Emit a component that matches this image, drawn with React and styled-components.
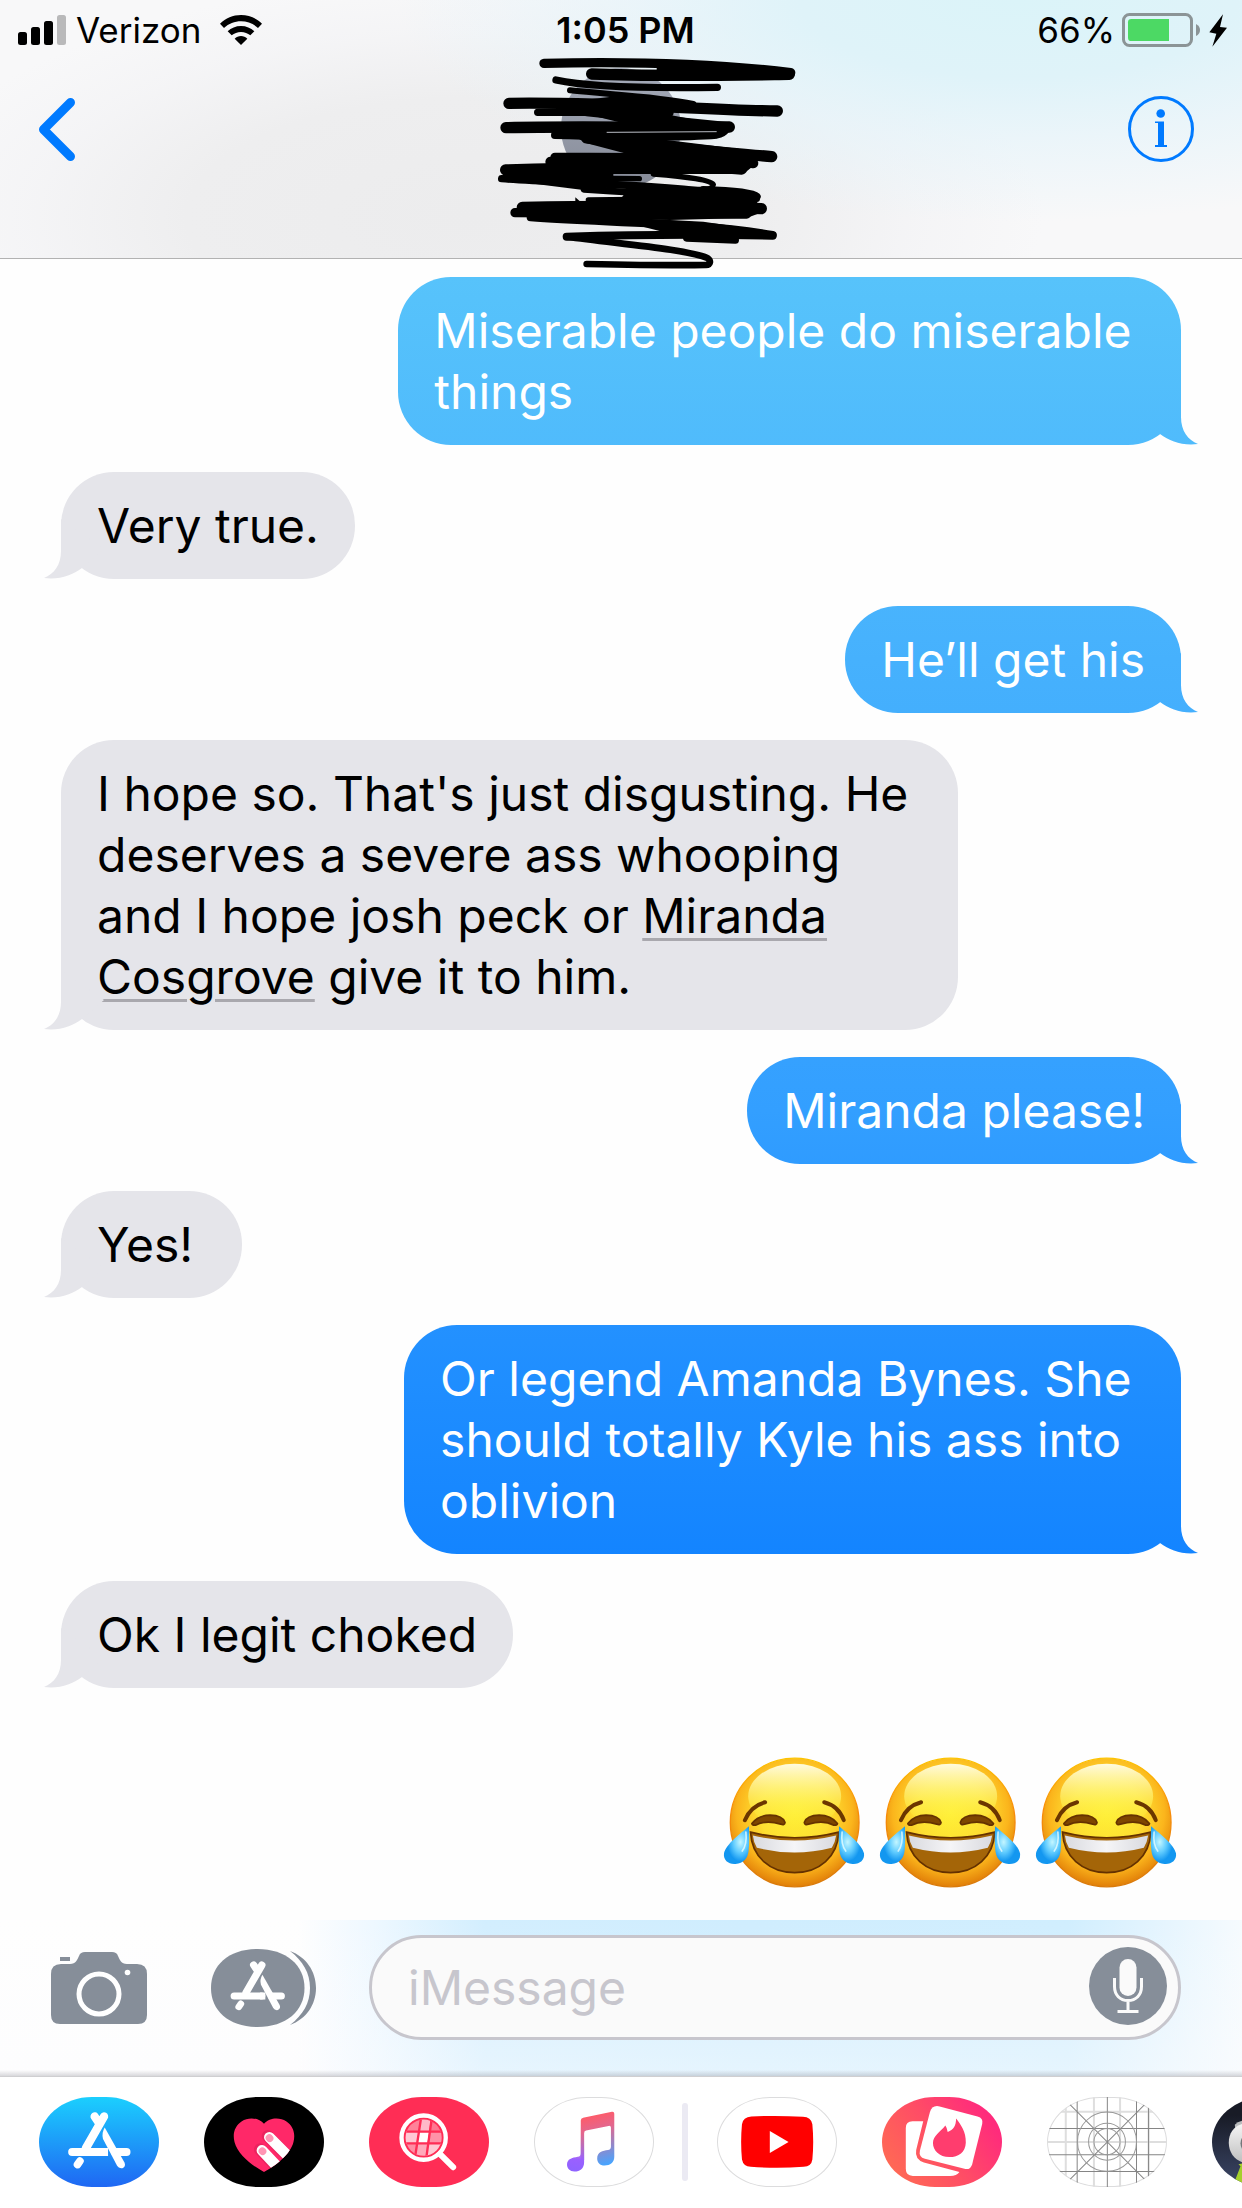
import React from "react";
import styled, { createGlobalStyle, css } from "styled-components";

const GlobalStyle = createGlobalStyle`
  *, *::before, *::after { box-sizing: border-box; }
  body {
    margin: 0;
    background: #fefefe;
    color: #000;
    font-family: Inter, Roboto, "Liberation Sans", sans-serif;
  }
  svg { display: block; }
`;

const Screen = styled.div`
  display: flex;
  flex-direction: column;
  min-height: 100vh;
  overflow: hidden;
`;

const Header = styled.header`
  position: relative;
  z-index: 1;
  border-bottom: 1px solid #b2b2b2;
  background:
    radial-gradient(ellipse 50% 86% at 82% 0%, #dbf4f9 0%, #dff3f9 35%, rgba(226, 243, 250, 0.6) 62%, rgba(240, 247, 249, 0) 100%),
    radial-gradient(ellipse 46% 92% at 38% 84%, #ececed 0%, #eeeeef 50%, rgba(243, 243, 245, 0.7) 78%, rgba(248, 248, 248, 0) 100%),
    #f8f8f9;
`;

const StatusBar = styled.div`
  display: grid;
  grid-template-columns: 1fr auto 1fr;
  align-items: center;
  height: 60px;
  padding: 0 15px 0 18px;
  font-size: 35px;
  line-height: 60px;
`;

const StatusGroup = styled.div`
  display: flex;
  align-items: center;
  justify-content: ${(p) => (p.$end ? "flex-end" : "flex-start")};
  gap: ${(p) => (p.$end ? "7px" : "10px")};
`;

const Carrier = styled.span`
  padding-right: 9px;
`;

const Clock = styled.time`
  padding-left: 6px;
  font-size: 36px;
  font-weight: 600;
`;

const NavBar = styled.nav`
  display: flex;
  justify-content: space-between;
  height: 198px;
  padding: 36px 48px 0 38px;
`;

const IconButton = styled.button`
  flex: none;
  align-self: ${(p) => p.$align || "center"};
  display: block;
  margin: 0;
  padding: 0;
  border: 0;
  background: none;
  cursor: pointer;
`;

const Contact = styled.div`
  position: absolute;
  top: 0;
  left: 50%;
  margin-left: -180px;
  pointer-events: none;
`;

const Thread = styled.main`
  flex: 1;
  display: flex;
  flex-direction: column;
  align-items: flex-start;
  gap: 27px;
  padding: 18px 61px 31px;
`;

const sentFill = css`
  background: linear-gradient(180deg, #59c5fb 0px, #57c3fb 277px, #46b1fd 660px, #339fff 1110px, #2391ff 1325px, #1384ff 1560px) fixed;
`;

const Bubble = styled.p`
  position: relative;
  min-width: 181px;
  max-width: 901px;
  margin: 0;
  padding: 23px 36px;
  border-radius: 53px;
  font-size: 48px;
  line-height: 61px;
  white-space: pre-wrap;
  align-self: ${(p) => (p.$sent ? "flex-end" : "flex-start")};
  color: ${(p) => (p.$sent ? "#fff" : "#000")};
  ${(p) => (p.$sent ? sentFill : "background: #e5e5ea;")}

  &::after {
    content: "";
    position: absolute;
    bottom: 0;
    width: 60px;
    height: 60px;
    ${(p) =>
      p.$sent
        ? css`
            right: -17px;
            ${sentFill}
            clip-path: path("M43 0 V32 C43 46 50 55 60 59 C44 61 32 56 22 49 L0 30 Z");
          `
        : css`
            left: -17px;
            background: #e5e5ea;
            clip-path: path("M17 0 V32 C17 46 10 55 0 59 C16 61 28 56 38 49 L60 30 Z");
          `}
  }
`;

const Line = styled.span`
  display: block;
`;

const DetectedLink = styled.a`
  color: inherit;
  text-decoration: underline;
  text-decoration-color: #a9a8ae;
  text-decoration-thickness: 3px;
  text-underline-offset: 5px;
`;

const EmojiRow = styled.div`
  display: flex;
  align-self: flex-end;
  gap: 14px;
  padding: 41px 4px 0 0;
`;

const ComposeBar = styled.form`
  display: flex;
  align-items: center;
  padding: 15px 61px 36px 51px;
  border-bottom: 1px solid #cfcfd1;
  background:
    linear-gradient(0deg, rgba(120, 120, 130, 0.28) 0, rgba(120, 120, 130, 0) 6px),
    linear-gradient(180deg, rgba(252, 252, 254, 0) 0%, rgba(252, 252, 254, 0.5) 100%),
    linear-gradient(90deg, #fefefe 0%, #fefefe 24%, #eef8ff 30%, #d2eefe 39%, #cfedfe 60%, #d0eefe 86%, #e6f5fe 94%, #f6fbfe 100%);
`;

const Drawer = styled(IconButton)`
  margin: 0 53px 0 64px;
`;

const Field = styled.div`
  flex: 1;
  min-width: 0;
  display: flex;
  align-items: center;
  height: 105px;
  padding: 0 11px 3px 36px;
  border: 3px solid #c7c6cd;
  border-radius: 53px;
  background: #fafafa;
`;

const MessageInput = styled.input`
  flex: 1;
  min-width: 0;
  height: 90px;
  padding: 3px 0 0;
  border: 0;
  outline: 0;
  background: none;
  color: #000;
  font: inherit;
  font-size: 48px;
  &::placeholder { color: #c7c6cd; opacity: 1; }
`;

const AppStrip = styled.nav`
  display: flex;
  align-items: center;
  gap: 45px;
  height: 131px;
  padding: 0 0 1px 39px;
  overflow: hidden;
  background: #fff;
`;

const AppPill = styled.button`
  flex: none;
  width: 120px;
  height: 90px;
  margin: 0;
  padding: 0;
  overflow: hidden;
  border: 0;
  border-radius: 53px / 45px;
  background: ${(p) => p.$fill || "#fff"};
  box-shadow: inset 0 0 0 1px ${(p) => (p.$fill ? "transparent" : "#dcdcdd")};
  cursor: pointer;
`;

const Divider = styled.span`
  flex: none;
  width: 6px;
  height: 78px;
  margin: 0 -16px 0 -17px;
  border-radius: 3px;
  background: #ebeaf3;
`;

function SignalIcon() {
  return (
    <svg width="48" height="30" viewBox="0 0 48 30" aria-hidden="true">
      <rect x="0" y="17" width="9" height="13" rx="2.5" />
      <rect x="13" y="12" width="9" height="18" rx="2.5" />
      <rect x="26" y="6" width="9" height="24" rx="2.5" />
      <rect x="39" y="0" width="9" height="30" rx="2.5" fill="#b9b9ba" />
    </svg>
  );
}

function WifiIcon() {
  return (
    <svg width="42" height="30" viewBox="0 0 126 90" aria-hidden="true">
      <path d="M63 0C87 0 109 9 126 26L114 39C100 26 82 19 63 19S26 26 12 39L0 26C17 9 39 0 63 0Z" />
      <path d="M63 33C79 33 92 39 103 49L91 61C83 55 74 51 63 51S43 55 35 61L23 49C34 39 47 33 63 33Z" />
      <path d="M63 63C70 63 77 66 82 71L63 90L44 71C49 66 56 63 63 63Z" />
    </svg>
  );
}

function BatteryIcon() {
  return (
    <svg width="105" height="34" viewBox="0 0 315 102" aria-hidden="true">
      <rect x="4.500" y="4.500" width="204" height="93" rx="18" fill="none" stroke="#8b9496" strokeWidth="9" />
      <path d="M28 18H141V84H28Q18 84 18 74V28Q18 18 28 18Z" fill="#4cd964" />
      <path d="M222 33Q234 39 234 51T222 69Z" fill="#8b9496" />
      <path d="M303 4L262 58L283 62L271 101L315 44L294 42Z" />
    </svg>
  );
}

const strokes = [
  ["M222 190C400 186 700 186 962 218", 28],
  ["M365 222C560 230 760 226 958 223", 34],
  ["M258 240C330 256 480 266 742 262", 22],
  ["M300 271C420 284 560 288 670 312", 18],
  ["M440 290L660 318L420 318Z", 10],
  ["M117 310C400 305 700 330 922 333", 34],
  ["M203 337C350 338 480 336 600 338", 22],
  ["M350 336C500 352 650 368 778 380", 26],
  ["M108 383C300 378 600 384 778 381", 34],
  ["M255 405C450 410 650 412 740 404Q760 400 768 388", 24],
  ["M350 414C550 440 750 456 905 470", 34],
  ["M560 440C650 460 800 478 850 490", 30],
  ["M255 472C450 472 700 470 840 485", 28],
  ["M242 486C450 492 700 500 815 508", 32],
  ["M107 510C300 505 500 500 700 502", 34],
  ["M95 536C250 548 500 550 720 576", 22],
  ["M107 524C300 534 450 536 508 536", 16],
  ["M550 522C650 530 728 540 730 554Q728 566 700 572", 16],
  ["M342 568C500 578 700 590 860 596", 20],
  ["M700 570C780 572 850 580 860 590", 24],
  ["M355 600L700 596", 16],
  ["M157 622C400 618 700 620 874 626", 34],
  ["M135 638C400 640 700 640 830 642", 28],
  ["M182 652C400 668 700 668 908 705", 24],
  ["M500 668L800 690L600 694Z", 14],
  ["M290 710C450 705 700 702 908 707", 24],
  ["M650 714L796 720", 22],
  ["M290 710C450 732 650 748 712 774C724 782 722 796 706 795C600 797 500 795 350 792", 20],
];

const solids = [
  "M470 285L660 305V335H340V300Z",
  "M560 190L960 215V238H560Z",
  "M360 345H600L690 362L785 372V392H400L445 366Z",
  "M300 402H745L590 420L900 458V482H550L350 430Z",
  "M250 462H860V490L820 522H110V500H238Z",
  "M100 515H430V562L340 570L100 540Z",
  "M480 560H720L862 590V612H440Z",
  "M150 612H880V635L830 654L600 660L180 655Z",
  "M500 655L700 665L905 695V705H640L600 690Z",
  "M316 592L332 606H316Z",
];

function RedactedContact() {
  return (
    <svg width="360" height="280" viewBox="-87 0 1080 840" role="img" aria-label="Contact">
      <defs>
        <linearGradient id="avatar" x1="0" y1="0" x2="0" y2="1">
          <stop offset="0" stopColor="#a5abb9" />
          <stop offset="1" stopColor="#858a97" />
        </linearGradient>
      </defs>
      <circle cx="453" cy="384" r="180" fill="url(#avatar)" />
      <g stroke="#000" strokeLinecap="round" strokeLinejoin="round" fill="none">
        {strokes.map(([d, w]) => (
          <path key={d} d={d} strokeWidth={w} fill={d.endsWith("Z") ? "#000" : "none"} />
        ))}
      </g>
      {solids.map((d) => (
        <path key={d} d={d} />
      ))}
      <path d="M410 397L740 395" stroke="#b9bcc4" strokeWidth="3" />
    </svg>
  );
}

function StoreGlyph() {
  return (
    <g stroke="#fff" fill="none" strokeLinecap="round" strokeWidth="25">
      <path d="M312 170L258 264M284 170L296 188" />
      <path d="M217 276H312M345 276H379" strokeWidth="24" />
      <path d="M314 203L373 307Q378 319 367 324Q356 326 351 317L309 237Q304 220 314 203Z" fill="#fff" stroke="none" />
      <path d="M324 264V288H306V264Z" fill="#fff" stroke="none" />
      <path d="M240 303L233 313" strokeWidth="23" />
    </g>
  );
}

function LaughingFace() {
  const tear = "M146 290C120 312 76 345 71 372C68 394 86 406 106 404C130 402 142 388 145 366C148 342 147 312 146 290Z";
  return (
    <svg width="142" height="133" viewBox="68 79 428 400" role="img" aria-label="Face with tears of joy">
      <defs>
        <radialGradient id="face" cx="0.5" cy="0.42" r="0.6">
          <stop offset="0" stopColor="#fff035" />
          <stop offset="0.45" stopColor="#fedf32" />
          <stop offset="0.75" stopColor="#fbb51c" />
          <stop offset="1" stopColor="#dd7605" />
        </radialGradient>
        <linearGradient id="shine" x1="0" y1="0" x2="0" y2="1">
          <stop offset="0" stopColor="#fffbe0" />
          <stop offset="0.6" stopColor="#fff35a" stopOpacity="0.6" />
          <stop offset="1" stopColor="#ffee33" stopOpacity="0" />
        </linearGradient>
        <linearGradient id="rim" x1="0" y1="0" x2="0" y2="1">
          <stop offset="0" stopColor="#fdc400" />
          <stop offset="0.4" stopColor="#f98d0a" />
          <stop offset="1" stopColor="#d97a0a" />
        </linearGradient>
        <radialGradient id="tear" cx="0.65" cy="0.42" r="0.6">
          <stop offset="0" stopColor="#c4f6ff" />
          <stop offset="0.45" stopColor="#62cdff" />
          <stop offset="0.85" stopColor="#1397f0" />
        </radialGradient>
        <linearGradient id="teeth" x1="0" y1="0" x2="1" y2="0">
          <stop offset="0" stopColor="#d9dadf" />
          <stop offset="0.5" stopColor="#f5f5f7" />
          <stop offset="1" stopColor="#d9dadf" />
        </linearGradient>
      </defs>
      <circle cx="284" cy="279" r="194" fill="url(#face)" stroke="url(#rim)" strokeWidth="4" />
      <ellipse cx="284" cy="200" rx="140" ry="98" fill="url(#shine)" />
      <g fill="none" stroke="#6b3600" strokeWidth="12" strokeLinecap="round">
        <path d="M134 272Q152 229 195 218" />
        <path d="M432 272Q416 229 373 218" />
      </g>
      <g fill="#7e4600" stroke="#653200" strokeWidth="5" strokeLinejoin="round">
        <path d="M155 282Q175 257 210 257Q248 258 255 279Q254 288 242 284Q198 270 166 287Q156 288 155 282Z" />
        <path d="M413 282Q393 257 358 257Q320 258 313 279Q314 288 326 284Q370 270 402 287Q412 288 413 282Z" />
      </g>
      <path d="M151 308Q284 342 417 308C414 382 358 430 284 430S154 382 151 308Z" fill="#a46508" stroke="#643100" strokeWidth="5" />
      <path d="M158 318Q284 348 409 318Q406 340 396 355Q284 384 170 355Q160 338 158 318Z" fill="url(#teeth)" />
      <path d={tear} fill="url(#tear)" />
      <path d={tear} fill="url(#tear)" transform="matrix(-1 0 0 1 564 0)" />
      <g fill="none" stroke="#e6fcff" strokeWidth="5" strokeLinecap="round" opacity="0.8">
        <path d="M137 308Q141 345 126 365" />
        <path d="M427 308Q423 345 438 365" />
      </g>
    </svg>
  );
}

function PillArt({ x, children }) {
  return (
    <svg width="120" height="90" viewBox={`${x} 112 358 268`} preserveAspectRatio="none" aria-hidden="true">
      {children}
    </svg>
  );
}

const heart = "M792 192C808 172 840 172 858 184C880 198 886 222 880 246C870 284 826 318 792 335C758 318 714 284 704 246C698 222 704 198 726 184C744 172 776 172 792 192Z";

export default function App() {
  return (
    <>
      <GlobalStyle />
      <Screen>
        <Header>
          <StatusBar>
            <StatusGroup>
              <SignalIcon />
              <Carrier>Verizon</Carrier>
              <WifiIcon />
            </StatusGroup>
            <Clock>1:05 PM</Clock>
            <StatusGroup $end>
              <span>66%</span>
              <BatteryIcon />
            </StatusGroup>
          </StatusBar>
          <NavBar>
            <IconButton type="button" aria-label="Back" $align="flex-start">
              <svg width="38" height="66" viewBox="0 0 38 66" fill="none" stroke="#007aff" strokeWidth="9" strokeLinecap="round" strokeLinejoin="round">
                <path d="M32.500 6.500L5.500 33.500L32.500 60.500" />
              </svg>
            </IconButton>
            <IconButton type="button" aria-label="Details" $align="flex-start">
              <svg width="66" height="66" viewBox="0 0 66 66" fill="#007aff">
                <circle cx="33" cy="33" r="31.500" fill="none" stroke="#007aff" strokeWidth="3" />
                <circle cx="32.700" cy="17.500" r="4.300" />
                <path d="M27 25.500H36V49H39V51H27V49H30V27H27Z" />
              </svg>
            </IconButton>
          </NavBar>
          <Contact>
            <RedactedContact />
          </Contact>
        </Header>

        <Thread>
          <Bubble $sent>{"Miserable people do miserable \nthings"}</Bubble>
          <Bubble>Very true.</Bubble>
          <Bubble $sent>He’ll get his</Bubble>
          <Bubble>
            <Line>{"I hope so. That's just disgusting. He "}</Line>
            <Line>{"deserves a severe ass whooping "}</Line>
            <Line>
              {"and I hope josh peck or "}
              <DetectedLink href="#miranda">Miranda</DetectedLink>
            </Line>
            <Line>
              <DetectedLink href="#miranda">Cosgrove</DetectedLink>
              {" give it to him."}
            </Line>
          </Bubble>
          <Bubble $sent>Miranda please!</Bubble>
          <Bubble>Yes!</Bubble>
          <Bubble $sent>{"Or legend Amanda Bynes. She \nshould totally Kyle his ass into \noblivion"}</Bubble>
          <Bubble>Ok I legit choked</Bubble>
          <EmojiRow>
            <LaughingFace />
            <LaughingFace />
            <LaughingFace />
          </EmojiRow>
        </Thread>

        <ComposeBar onSubmit={(e) => e.preventDefault()}>
          <IconButton type="button" aria-label="Camera">
            <svg width="96" height="72" viewBox="0 0 96 72">
              <path d="M10 12H19C25 12 26 8 28 4C29 1 31 0 34 0H61C64 0 66 1 67 4C69 8 70 12 76 12H86Q96 12 96 22V63Q96 72 87 72H9Q0 72 0 63V22Q0 12 10 12Z" fill="#868e99" />
              <rect x="9" y="5" width="10" height="4" fill="#868e99" />
              <circle cx="48" cy="42" r="20" fill="none" stroke="#fff" strokeWidth="5" />
              <circle cx="76.500" cy="20.500" r="2.800" fill="#fff" />
            </svg>
          </IconButton>
          <Drawer type="button" aria-label="Apps">
            <svg width="105" height="78" viewBox="0 0 105 78">
              <path d="M46.500 0C75 0 93.500 16 93.500 39S75 78 46.500 78S0 62 0 39S18 0 46.500 0Z" fill="#868e99" />
              <path d="M79 2C95 8 105 22 105 39S95 70 79 76C92 66 99 54 99 39S92 12 79 2Z" fill="#868e99" />
              <g transform="translate(46.6 36.8) scale(0.292) translate(-297.5 -241)">
                <StoreGlyph />
              </g>
            </svg>
          </Drawer>
          <Field>
            <MessageInput type="text" placeholder="iMessage" aria-label="iMessage" />
            <IconButton type="button" aria-label="Dictate">
              <svg width="78" height="78" viewBox="0 0 78 78">
                <circle cx="39" cy="39" r="39" fill="#868e99" />
                <rect x="30.500" y="12" width="17" height="37" rx="8.500" fill="#fafafa" />
                <path d="M25.500 31V39.500C25.500 48 31 53.500 39 53.500S52.500 48 52.500 39.500V31M39 54V64M28.500 64.500H49.500" fill="none" stroke="#fafafa" strokeWidth="3" />
              </svg>
            </IconButton>
          </Field>
        </ComposeBar>

        <AppStrip aria-label="iMessage apps">
          <AppPill aria-label="App Store" $fill="linear-gradient(180deg, #1bcffe, #1f67f3)">
            <PillArt x={118}>
              <StoreGlyph />
            </PillArt>
          </AppPill>
          <AppPill aria-label="Digital Touch" $fill="#000">
            <PillArt x={613}>
              <clipPath id="heart"><path d={heart} /></clipPath>
              <path d={heart} fill="#ff2968" />
              <g clipPath="url(#heart)" strokeLinecap="round">
                <path d="M803 228L880 306M780 268L850 342" stroke="#d31d55" strokeWidth="36" opacity="0.45" />
                <path d="M808 232L890 314M786 271L850 339" stroke="#fff" strokeWidth="32" />
                <path d="M808 234L809 235M787 273L788 274" stroke="#ff95b4" strokeWidth="22" />
              </g>
            </PillArt>
          </AppPill>
          <AppPill aria-label="Image search" $fill="#ff2d55">
            <PillArt x={28}>
              <clipPath id="lens"><circle cx="191" cy="233" r="54" /></clipPath>
              <g clipPath="url(#lens)">
                <path d="M130 170H183L176 213H130Z" fill="#ff8299" />
                <path d="M183 170H213L208 213H177Z" fill="#ffb9c8" />
                <path d="M213 170H260V213H208Z" fill="#ff7690" />
                <path d="M130 213H176L169 252H130Z" fill="#ffc9d4" />
                <path d="M176 213H208L202 252H169Z" fill="#fff" />
                <path d="M208 213H260V252H202Z" fill="#ff92a8" />
                <path d="M130 252H169L165 300H130Z" fill="#ff8da4" />
                <path d="M169 252H202L196 300H165Z" fill="#ffa9ba" />
                <path d="M202 252H260V300H196Z" fill="#ffc9d4" />
                <path d="M130 215H255M130 250H255M184 170L164 300M216 170L198 300" stroke="#ff2d55" strokeWidth="7" />
              </g>
              <circle cx="191" cy="233" r="66" fill="none" stroke="#fff" strokeWidth="13" />
              <path d="M240 282L279 321" stroke="#fff" strokeWidth="18" strokeLinecap="round" />
            </PillArt>
          </AppPill>
          <AppPill aria-label="Music">
            <PillArt x={522.5}>
              <defs>
                <linearGradient id="music" gradientUnits="userSpaceOnUse" x1="675" y1="170" x2="715" y2="320">
                  <stop offset="0" stopColor="#ff5b68" />
                  <stop offset="0.3" stopColor="#e2678f" />
                  <stop offset="1" stopColor="#47a5ff" />
                </linearGradient>
                <linearGradient id="noteLeft" gradientUnits="userSpaceOnUse" x1="660" y1="200" x2="645" y2="330">
                  <stop offset="0" stopColor="#ff5b68" stopOpacity="0" />
                  <stop offset="0.75" stopColor="#9a60ff" />
                  <stop offset="1" stopColor="#8f63ff" />
                </linearGradient>
              </defs>
              <path d="M662 182Q662 176 669 174L755 156Q762 155 762 162V290C762 307 750 316 733 316C719 316 711 307 711 295C711 276 728 272 743 270Q752 269 752 260V203Q752 197 745 198L678 212Q672 213 672 220V300H662Z" fill="url(#music)" />
              <path d="M662 200H672V306C672 324 660 334 643 334C630 334 621 325 621 314C621 296 636 293 653 290Q662 288 662 280Z" fill="url(#noteLeft)" />
            </PillArt>
          </AppPill>
          <Divider />
          <AppPill aria-label="YouTube">
            <PillArt x={1071.5}>
              <path d="M1174 170Q1251 166 1328 171Q1352 172 1356 193Q1361 246 1356 298Q1353 319 1330 320Q1251 326 1172 320Q1150 319 1146 298Q1141 246 1146 193Q1149 172 1174 170Z" fill="#f00" />
              <path d="M1229 213V279L1285 246Z" fill="#fff" />
            </PillArt>
          </AppPill>
          <AppPill aria-label="Tinder Stacks" $fill="linear-gradient(55deg, #ff6a54 10%, #ff4c66 50%, #ff2b7c 85%)">
            <PillArt x={127}>
              <path d="M250 184H218Q198 184 198 204V326Q198 347 219 347H330Q350 347 358 335L252 307Q224 298 229 270Z" fill="#fff" />
              <path d="M299 140L412 170Q430 175 426 192L396 312Q391 330 373 326L255 296Q236 291 240 272L270 157Q276 135 299 140Z" fill="#fff" />
              <path d="M348 176C362 194 378 215 377 248C376 276 356 291 328 291C298 290 279 272 279 248C280 228 300 217 316 197Q321 204 323 216C340 210 348 198 348 176Z" fill="#ff3d6e" />
            </PillArt>
          </AppPill>
          <AppPill aria-label="Placeholder app">
            <PillArt x={622}>
              <g fill="none">
                <path d="M678 112V380M762 112V380M840 112V380M925 112V380M622 156H980M622 246H980" stroke="#dedede" strokeWidth="6" />
                <path d="M712 112V380M802 112V380M889 112V380M925 112V380M622 206H980M622 284H980M622 334H980M667 111L937 381M937 111L667 381" stroke="#858585" strokeWidth="3" />
                <circle cx="801" cy="245" r="88" stroke="#999" strokeWidth="3" />
                <circle cx="801" cy="245" r="55" stroke="#999" strokeWidth="3" />
                <circle cx="801" cy="245" r="39" stroke="#999" strokeWidth="3" />
              </g>
            </PillArt>
          </AppPill>
          <AppPill aria-label="Game" $fill="linear-gradient(180deg, #181b26 20%, #3c4768)">
            <PillArt x={1117}>
              <defs>
                <linearGradient id="helmet" x1="0" y1="0" x2="0" y2="1">
                  <stop offset="0" stopColor="#f6f6f6" />
                  <stop offset="1" stopColor="#bdbdbd" />
                </linearGradient>
              </defs>
              <path d="M1185 195Q1195 182 1215 182H1260V220H1188Z" fill="#b9bbbd" />
              <path d="M1186 360L1202 318L1196 312L1240 304V380H1190Z" fill="#a4cf2c" />
              <path d="M1218 190C1184 194 1167 218 1167 248C1168 284 1190 304 1225 312H1290V190Z" fill="url(#helmet)" />
              <ellipse cx="1218" cy="250" rx="16" ry="24" fill="#75787b" />
            </PillArt>
          </AppPill>
        </AppStrip>
      </Screen>
    </>
  );
}
